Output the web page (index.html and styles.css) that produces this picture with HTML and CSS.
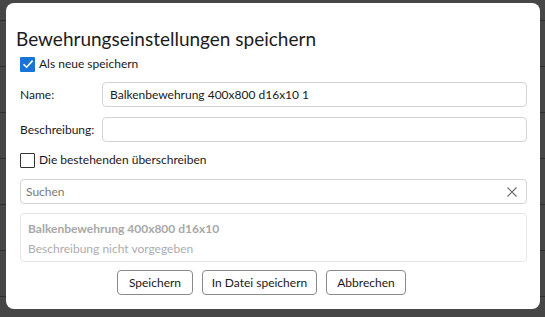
FILE: index.html
```html
<!DOCTYPE html>
<html lang="de">
<head>
<meta charset="utf-8">
<title>Bewehrungseinstellungen speichern</title>
<link rel="stylesheet" href="styles.css">
</head>
<body>
<div class="backdrop">
  <div class="dialog">
    <h1 class="title">Bewehrungseinstellungen speichern</h1>
    <label class="check-row">
      <span class="box checked">
        <svg viewBox="0 0 14 14" width="14" height="14"><path d="M2.5 7.2 L5.6 10.2 L11.6 3.6" fill="none" stroke="#fff" stroke-width="1.6"/></svg>
      </span>
      <span class="check-label">Als neue speichern</span>
    </label>
    <div class="field-row">
      <span class="field-label">Name:</span>
      <div class="input">Balkenbewehrung 400x800 d16x10 1</div>
    </div>
    <div class="field-row">
      <span class="field-label">Beschreibung:</span>
      <div class="input"></div>
    </div>
    <label class="check-row second">
      <span class="box"></span>
      <span class="check-label">Die bestehenden überschreiben</span>
    </label>
    <div class="search">
      <span class="placeholder">Suchen</span>
      <svg class="clear" viewBox="0 0 12 12" width="12" height="12"><path d="M1.5 1.5 L10.5 10.5 M10.5 1.5 L1.5 10.5" stroke="#6a6a6a" stroke-width="1.1" fill="none"/></svg>
    </div>
    <div class="list">
      <div class="item-title">Balkenbewehrung 400x800 d16x10</div>
      <div class="item-desc">Beschreibung nicht vorgegeben</div>
    </div>
    <div class="buttons">
      <button class="btn">Speichern</button>
      <button class="btn">In Datei speichern</button>
      <button class="btn">Abbrechen</button>
    </div>
  </div>
</div>
</body>
</html>
```
FILE: styles.css
```css
html, body {
  margin: 0;
  padding: 0;
}
body {
  width: 545px;
  height: 317px;
  overflow: hidden;
  background-color: #464646;
  background-image:
    repeating-linear-gradient(to bottom, transparent 0, transparent 20px, #2e2e2e 20px, #2e2e2e 21px, transparent 21px, transparent 46px);
  font-family: "Lato", "Noto Sans", sans-serif;
  color: #1a1a1a;
}
.backdrop {
  padding: 3px 5px 0 6px;
}
.dialog {
  box-sizing: border-box;
  width: 534px;
  height: 306px;
  background: #fff;
  border-radius: 8px;
  padding: 22px 13px 0 14px;
  display: flex;
  flex-direction: column;
}
.title {
  margin: 0 0 0 -4px;
  font-size: 19px;
  font-weight: 400;
  line-height: 27px;
  color: #1c1c1c;
}
.check-row {
  display: flex;
  align-items: center;
  gap: 4px;
  height: 14px;
  margin-top: 5px;
  font-size: 12px;
}
.check-row.second {
  margin-top: 11px;
}
.box {
  box-sizing: border-box;
  width: 15px;
  height: 15px;
  border: 1px solid #333;
  border-radius: 1px;
  display: flex;
  align-items: center;
  justify-content: center;
  background: #fff;
  flex: none;
}
.box.checked {
  border: none;
  background: #1a73d9;
}
.check-label {
  line-height: 14px;
  color: #1a1a1a;
}
.field-row {
  display: flex;
  align-items: center;
  margin-top: 10px;
  font-size: 12px;
}
.check-row + .field-row {
  margin-top: 11px;
}
.field-label {
  width: 82px;
  flex: none;
  color: #1a1a1a;
}
.input {
  box-sizing: border-box;
  flex: 1;
  height: 25px;
  border: 1px solid #d4d4d4;
  border-radius: 4px;
  padding: 0 7px;
  line-height: 23px;
  font-size: 12px;
  color: #1a1a1a;
}
.search {
  box-sizing: border-box;
  margin-top: 12px;
  height: 25px;
  border: 1px solid #d4d4d4;
  border-radius: 4px;
  padding: 0 8px 0 5px;
  display: flex;
  align-items: center;
  justify-content: space-between;
  font-size: 12px;
}
.placeholder {
  color: #7a7a7a;
}
.clear {
  flex: none;
}
.list {
  box-sizing: border-box;
  margin-top: 9px;
  height: 49px;
  border: 1px solid #e6e6e6;
  border-radius: 4px;
  padding: 6px 7px 0;
  font-size: 12px;
}
.item-title {
  font-weight: 700;
  color: #a8a8a8;
  line-height: 17px;
}
.item-desc {
  color: #adadad;
  line-height: 17px;
  margin-top: 3px;
}
.buttons {
  display: flex;
  justify-content: center;
  gap: 9px;
  margin-top: 8px;
  padding-right: 24px;
}
.btn {
  box-sizing: border-box;
  height: 25px;
  border: 1px solid #8a8a8a;
  border-radius: 4px;
  background: #fff;
  font-family: "Lato", "Noto Sans", sans-serif;
  font-size: 12px;
  color: #1a1a1a;
  padding: 0;
  white-space: nowrap;
}
.btn:nth-child(1) { width: 76px; }
.btn:nth-child(2) { width: 115px; }
.btn:nth-child(3) { width: 80px; }
```
